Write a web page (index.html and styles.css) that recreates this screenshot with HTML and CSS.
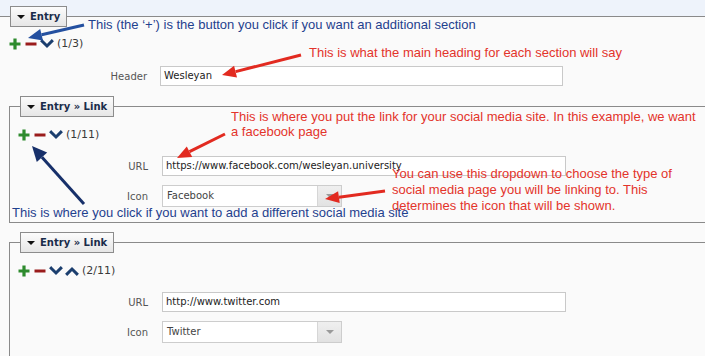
FILE: index.html
```html
<!DOCTYPE html>
<html>
<head>
<meta charset="utf-8">
<link rel="stylesheet" href="styles.css">
</head>
<body>
<fieldset class="entry">
  <legend class="tab"><span class="caret"></span>Entry</legend>
  <div class="tools">
    <svg class="ico" viewBox="0 0 12 12"><path d="M6 0.5V11.5M0.5 6H11.5" class="plus"/></svg>
    <svg class="ico" viewBox="0 0 12 12"><path d="M0.5 6H11.5" class="minus"/></svg>
    <svg class="ico" viewBox="0 0 12 12"><path d="M1.2 3.2L6 8L10.8 3.2" class="chev"/></svg>
    <span class="count">(1/3)</span>
  </div>
  <div class="field top-field">
    <span class="label">Header</span>
    <div class="input">Wesleyan</div>
  </div>

  <fieldset class="link">
    <legend class="tab"><span class="caret"></span>Entry » Link</legend>
    <div class="tools">
      <svg class="ico" viewBox="0 0 12 12"><path d="M6 0.5V11.5M0.5 6H11.5" class="plus"/></svg>
      <svg class="ico" viewBox="0 0 12 12"><path d="M0.5 6H11.5" class="minus"/></svg>
      <svg class="ico" viewBox="0 0 12 12"><path d="M1.2 3.2L6 8L10.8 3.2" class="chev"/></svg>
      <span class="count">(1/11)</span>
    </div>
    <div class="field url-field">
      <span class="label">URL</span>
      <div class="input">https://www.facebook.com/wesleyan.university</div>
    </div>
    <div class="field icon-field">
      <span class="label">Icon</span>
      <div class="select"><span class="val">Facebook</span><span class="btn"><span class="tri"></span></span></div>
    </div>
  </fieldset>

  <fieldset class="link">
    <legend class="tab"><span class="caret"></span>Entry » Link</legend>
    <div class="tools">
      <svg class="ico" viewBox="0 0 12 12"><path d="M6 0.5V11.5M0.5 6H11.5" class="plus"/></svg>
      <svg class="ico" viewBox="0 0 12 12"><path d="M0.5 6H11.5" class="minus"/></svg>
      <svg class="ico" viewBox="0 0 12 12"><path d="M1.2 3.2L6 8L10.8 3.2" class="chev"/></svg>
      <svg class="ico" viewBox="0 0 12 12"><path d="M1.2 8.8L6 4L10.8 8.8" class="chev"/></svg>
      <span class="count">(2/11)</span>
    </div>
    <div class="field url-field">
      <span class="label">URL</span>
      <div class="input">http://www.twitter.com</div>
    </div>
    <div class="field icon-field">
      <span class="label">Icon</span>
      <div class="select"><span class="val">Twitter</span><span class="btn"><span class="tri"></span></span></div>
    </div>
  </fieldset>
</fieldset>

<div class="notes">
  <svg class="arrows" width="705" height="356" viewBox="0 0 705 356">
    <g class="a-blue">
      <line x1="84" y1="25" x2="41.6" y2="34.8"/>
      <polygon points="28,38 40.2,29 43,40.6"/>
    </g>
    <g class="a-red">
      <line x1="301" y1="55" x2="235.6" y2="71.6"/>
      <polygon points="222,75 234.1,65.8 237,77.4"/>
      <line x1="225" y1="134" x2="189.5" y2="151.7"/>
      <polygon points="177,158 186.8,146.4 192.2,157.1"/>
      <line x1="385" y1="191" x2="338.9" y2="197.2"/>
      <polygon points="325,199 338.1,191.2 339.7,203.1"/>
    </g>
    <g class="a-navy">
      <line x1="84" y1="204" x2="42" y2="157.2"/>
      <polygon points="32,146 47.2,152.5 36.8,161.9"/>
    </g>
  </svg>
  <div class="note blue n1">This (the ‘+’) is the button you click if you want an additional section</div>
  <div class="note red n2">This is what the main heading for each section will say</div>
  <div class="note red n3">This is where you put the link for your social media site. In this example, we want<br>a facebook page</div>
  <div class="note red n4">You can use this dropdown to choose the type of<br>social media page you will be linking to. This<br>determines the icon that will be shown.</div>
  <div class="note blue n5">This is where you click if you want to add a different social media site</div>
</div>
</body>
</html>
```
FILE: styles.css
```css
html, body {
  margin: 0;
  width: 705px;
  height: 356px;
  overflow: hidden;
}
body {
  padding-top: 6px;
  box-sizing: border-box;
  background: #eef3fb;
  font-family: "DejaVu Sans", Verdana, sans-serif;
  position: relative;
}
fieldset {
  margin: 0;
  padding: 0;
  min-width: 0;
}
.entry {
  border: 0;
  border-top: 1px solid #8a8a8a;
  background: #fafafa;
  box-sizing: border-box;
  height: 350px;
  overflow: hidden;
}
.link {
  margin: 10px 0 0 9px;
  padding-bottom: 15px;
  border: 1px solid #8a8a8a;
  border-right: 0;
  background: #fafafa;
}
.link + .link {
  margin-top: 9px;
}
.tab {
  margin-left: 10px;
  padding: 0 6px;
  height: 19px;
  line-height: 19px;
  border: 1px solid #8c8c8c;
  background: linear-gradient(#fcfcfc, #e6e6e6);
  font-weight: bold;
  font-size: 10px;
  color: #1a2c4a;
  white-space: nowrap;
}
.caret {
  display: inline-block;
  width: 0;
  height: 0;
  border-left: 4.5px solid transparent;
  border-right: 4.5px solid transparent;
  border-top: 4px solid #111;
  margin-right: 5px;
  vertical-align: 1px;
}
.tools {
  display: flex;
  align-items: center;
  gap: 4px;
  height: 14px;
  margin: 10px 0 0 9px;
}
.link .tools {
  margin: 11px 0 0 8px;
}
.ico {
  width: 12px;
  height: 12px;
  flex: none;
  overflow: visible;
}
.plus { stroke: #2e8b2e; stroke-width: 3.2; fill: none; }
.minus { stroke: #9a1c1c; stroke-width: 3; fill: none; }
.chev { stroke: #1b3e6e; stroke-width: 3; fill: none; stroke-linecap: square; }
.count {
  font-size: 11px;
  color: #3a3a3a;
  line-height: 14px;
}
.field {
  display: flex;
  align-items: center;
}
.label {
  font-size: 10px;
  color: #555;
  text-align: right;
}
.top-field { margin-top: 15px; }
.top-field .label { width: 147px; margin-right: 13px; }
.top-field .input { width: 403px; }
.url-field { margin-top: 14px; }
.icon-field { margin-top: 9px; }
.link .label { width: 138px; margin-right: 14px; }
.link .input { width: 404px; }
.input {
  box-sizing: border-box;
  height: 20px;
  border: 1px solid #c9c9c9;
  background: #fff;
  padding: 0 3px;
  font-size: 10px;
  line-height: 18px;
  color: #222;
  white-space: nowrap;
}
.select {
  box-sizing: border-box;
  width: 180px;
  height: 22px;
  border: 1px solid #cdcdcd;
  background: #fff;
  display: flex;
}
.val {
  flex: 1;
  padding-left: 4px;
  font-size: 10px;
  line-height: 20px;
  color: #444;
}
.btn {
  width: 23px;
  background: linear-gradient(#efefef, #e2e2e2);
  border-left: 1px solid #d6d6d6;
  display: flex;
  align-items: center;
  justify-content: center;
}
.tri {
  width: 0;
  height: 0;
  border-left: 4px solid transparent;
  border-right: 4px solid transparent;
  border-top: 4px solid #9a9a9a;
}
.notes {
  position: absolute;
  left: 0;
  top: 0;
  width: 705px;
  height: 356px;
  pointer-events: none;
}
.arrows {
  position: absolute;
  left: 0;
  top: 0;
}
.arrows line { stroke-width: 3; }
.a-blue line { stroke: #2450a0; }
.a-blue polygon { fill: #2450a0; }
.a-red line { stroke: #e22a20; }
.a-red polygon { fill: #e22a20; }
.a-navy line { stroke: #17306a; }
.a-navy polygon { fill: #17306a; }
.note {
  position: absolute;
  font-family: "Liberation Sans", Arial, sans-serif;
  font-size: 13px;
  line-height: 16px;
  white-space: nowrap;
}
.blue { color: #1f418e; }
.red { color: #e3342b; }
.n1 { left: 88px; top: 17px; }
.n2 { left: 309px; top: 45px; }
.n3 { left: 231px; top: 109px; line-height: 15px; }
.n4 { left: 392px; top: 166px; }
.n5 { left: 12px; top: 205px; }
```
